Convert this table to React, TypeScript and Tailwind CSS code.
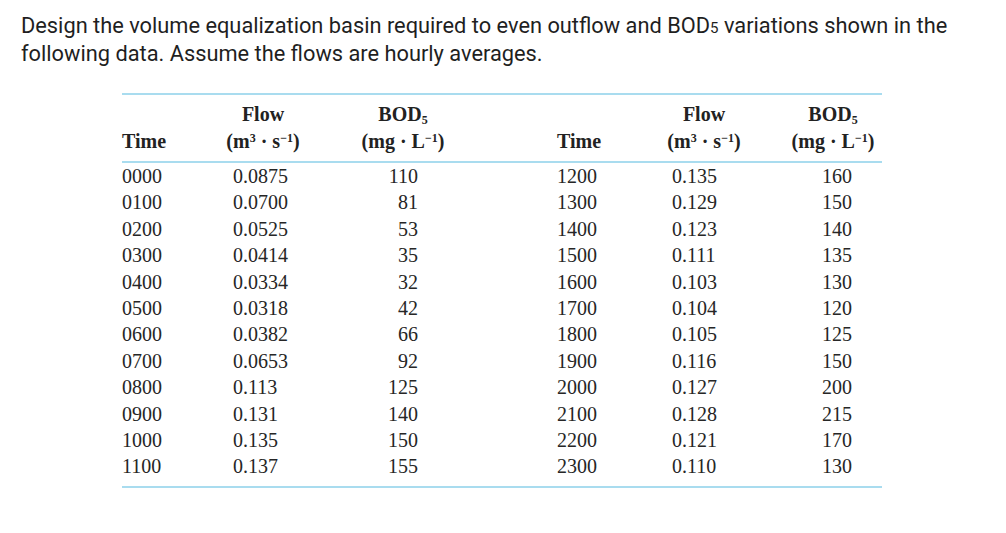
import React from "react";

const left = [
  ["0000", "0.0875", "110"],
  ["0100", "0.0700", "81"],
  ["0200", "0.0525", "53"],
  ["0300", "0.0414", "35"],
  ["0400", "0.0334", "32"],
  ["0500", "0.0318", "42"],
  ["0600", "0.0382", "66"],
  ["0700", "0.0653", "92"],
  ["0800", "0.113", "125"],
  ["0900", "0.131", "140"],
  ["1000", "0.135", "150"],
  ["1100", "0.137", "155"],
];

const right = [
  ["1200", "0.135", "160"],
  ["1300", "0.129", "150"],
  ["1400", "0.123", "140"],
  ["1500", "0.111", "135"],
  ["1600", "0.103", "130"],
  ["1700", "0.104", "120"],
  ["1800", "0.105", "125"],
  ["1900", "0.116", "150"],
  ["2000", "0.127", "200"],
  ["2100", "0.128", "215"],
  ["2200", "0.121", "170"],
  ["2300", "0.110", "130"],
];

const cols =
  "grid grid-cols-[111px_60px_95px_30px_139px_115px_64px_78px_38px_30px]";

const FlowHead = ({ col }: { col: string }) => (
  <div className={`${col} row-start-1 row-span-2 flex flex-col items-center whitespace-nowrap`}>
    <div className="h-[27px] leading-[27px]">Flow</div>
    <div className="h-[27px] leading-[27px]">
      (m<sup className="text-[12px]">3</sup> · s<sup className="text-[12px]">−1</sup>)
    </div>
  </div>
);

const BodHead = ({ col }: { col: string }) => (
  <div className={`${col} row-start-1 row-span-2 flex flex-col items-center whitespace-nowrap`}>
    <div className="h-[27px] leading-[27px]">
      BOD<sub className="text-[12px]">5</sub>
    </div>
    <div className="h-[27px] leading-[27px]">
      (mg · L<sup className="text-[12px]">−1</sup>)
    </div>
  </div>
);

const App: React.FC = () => {
  return (
    <div className="w-[1006px] h-[533px] bg-white overflow-hidden">
      <div className="pl-[21px] pt-[13px] text-[21.8px] leading-[25px] text-[#1f1f1f] font-['Roboto',sans-serif] whitespace-nowrap">
        <div>
          Design the volume equalization basin required to even outflow and BOD
          <span className="text-[15px]">5</span> variations shown in the
        </div>
        <div>following data. Assume the flows are hourly averages.</div>
      </div>

      <div className="ml-[122px] mt-[27px] w-[760px] font-['Liberation_Serif',serif] text-[20px] text-[#262626]">
        <div className="h-[2px] bg-[#a9dcef]" />
        <div className={`${cols} pt-[6px] pb-[6px] font-bold text-[#222]`}>
          <div className="col-start-1 row-start-2 h-[27px] leading-[27px]">Time</div>
          <FlowHead col="col-start-2" />
          <BodHead col="col-start-4" />
          <div className="col-start-6 row-start-2 h-[27px] leading-[27px]">Time</div>
          <FlowHead col="col-start-7" />
          <BodHead col="col-start-9" />
        </div>
        <div className="h-[2px] bg-[#a9dcef]" />
        <div className="pb-[6px]">
          {left.map((l, i) => {
            const r = right[i];
            return (
              <div key={l[0]} className={`${cols} h-[26.4px] leading-[26.4px]`}>
                <div className="col-start-1">{l[0]}</div>
                <div className="col-start-2">{l[1]}</div>
                <div className="col-start-4 text-right">{l[2]}</div>
                <div className="col-start-6">{r[0]}</div>
                <div className="col-start-7">{r[1]}</div>
                <div className="col-start-9 text-right">{r[2]}</div>
              </div>
            );
          })}
        </div>
        <div className="h-[2px] bg-[#a9dcef]" />
      </div>
    </div>
  );
};

export default App;
